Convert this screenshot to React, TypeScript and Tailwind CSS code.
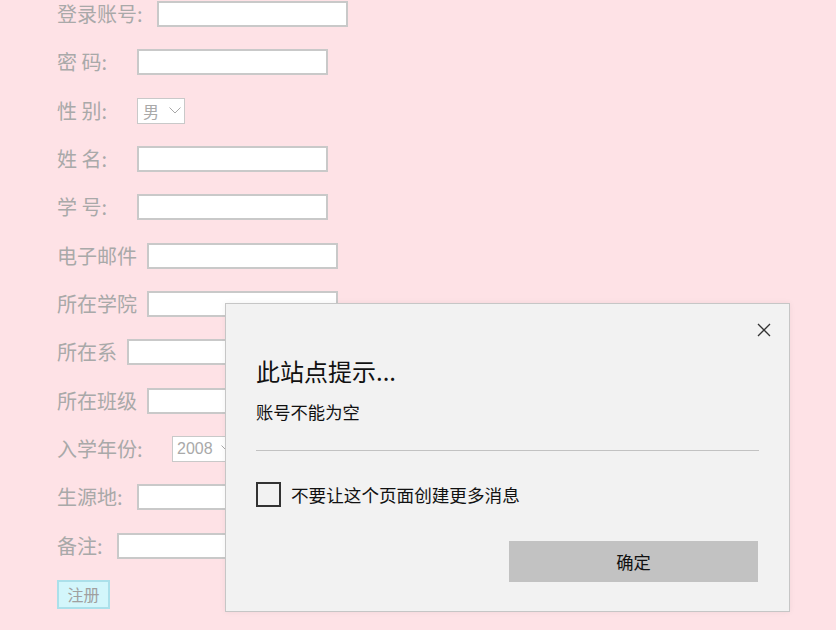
import React from "react";

const font = { fontFamily: '"Noto Sans CJK SC", "Noto Sans", sans-serif' };

type Row = { label: string; w: string; kind: "input" | "sex" | "year" };

const rows: Row[] = [
  { label: "登录账号:", w: "w-[100px]", kind: "input" },
  { label: "密 码:", w: "w-[80px]", kind: "input" },
  { label: "性 别:", w: "w-[80px]", kind: "sex" },
  { label: "姓 名:", w: "w-[80px]", kind: "input" },
  { label: "学 号:", w: "w-[80px]", kind: "input" },
  { label: "电子邮件", w: "w-[90px]", kind: "input" },
  { label: "所在学院", w: "w-[90px]", kind: "input" },
  { label: "所在系", w: "w-[70px]", kind: "input" },
  { label: "所在班级", w: "w-[90px]", kind: "input" },
  { label: "入学年份:", w: "w-[115px]", kind: "year" },
  { label: "生源地:", w: "w-[80px]", kind: "input" },
  { label: "备注:", w: "w-[60px]", kind: "input" },
];

function Chevron() {
  return (
    <svg width="12" height="7" viewBox="0 0 12 7" fill="none" className="shrink-0">
      <path d="M0.5 0.5 L6 6 L11.5 0.5" stroke="#a8a8a8" strokeWidth="1" />
    </svg>
  );
}

export default function App() {
  return (
    <div className="relative w-[836px] h-[630px] overflow-hidden bg-[#fee2e6]" style={font}>
      <div className="flex flex-col gap-[22.33px] pt-[1px] pl-[57px]">
        {rows.map((r) => (
          <div key={r.label} className="flex items-center h-[26px]">
            <span className={`${r.w} shrink-0 text-[20px] leading-[26px] text-[#a9a9a9] whitespace-pre`}>{r.label}</span>
            {r.kind === "input" && (
              <div className="w-[191px] h-[26px] bg-white border-2 border-[#c9c9c9]" />
            )}
            {r.kind === "sex" && (
              <div className="w-[48px] h-[26px] bg-white border border-[#c9c9c9] flex items-center pl-[5px] gap-[10px]">
                <span className="text-[16px] leading-none text-[#a9a9a9]">男</span>
                <Chevron />
              </div>
            )}
            {r.kind === "year" && (
              <div className="w-[70px] h-[26px] bg-white border border-[#c9c9c9] flex items-center pl-[4px] gap-[8px]">
                <span className="text-[16px] leading-none text-[#a9a9a9]" style={{ fontFamily: '"Liberation Sans", Arial, sans-serif' }}>2008</span>
                <Chevron />
              </div>
            )}
          </div>
        ))}
        <div className="flex">
          <button className="w-[53px] h-[29px] bg-[#d3f6fb] border-2 border-[#abe0ea] text-[16px] leading-none text-[#a0a0a0] flex items-center justify-center -mt-[1px]">
            注册
          </button>
        </div>
      </div>

      <div className="absolute left-[225px] top-[303px] w-[565px] h-[309px] bg-[#f2f2f2] border border-[#c6c6c6] shadow-[0_0_6px_rgba(0,0,0,0.06)]">
        <button className="absolute right-[17px] top-[18px] w-[16px] h-[16px] flex items-center justify-center">
          <svg width="14" height="14" viewBox="0 0 14 14">
            <path d="M1 1 L13 13 M13 1 L1 13" stroke="#333" strokeWidth="1.3" />
          </svg>
        </button>
        <div className="pl-[30px] pr-[30px] pt-[52px] flex flex-col">
          <div className="text-[24px] leading-[30px] text-[#111]">此站点提示...</div>
          <div className="mt-[14px] text-[17.3px] leading-[24px] text-[#111]">账号不能为空</div>
          <div className="mt-[26px] h-px bg-[#c2c2c2] w-[503px]" />
          <div className="mt-[31px] flex items-center gap-[10px]">
            <div className="w-[25px] h-[25px] border-2 border-[#333] bg-transparent shrink-0" />
            <span className="text-[17.6px] leading-[24px] text-[#111]">不要让这个页面创建更多消息</span>
          </div>
          <div className="mt-[34px] flex justify-end pr-[1px]">
            <button className="w-[249px] h-[41px] bg-[#c2c2c2] text-[17.3px] text-[#111] flex items-center justify-center">
              确定
            </button>
          </div>
        </div>
      </div>
    </div>
  );
}
